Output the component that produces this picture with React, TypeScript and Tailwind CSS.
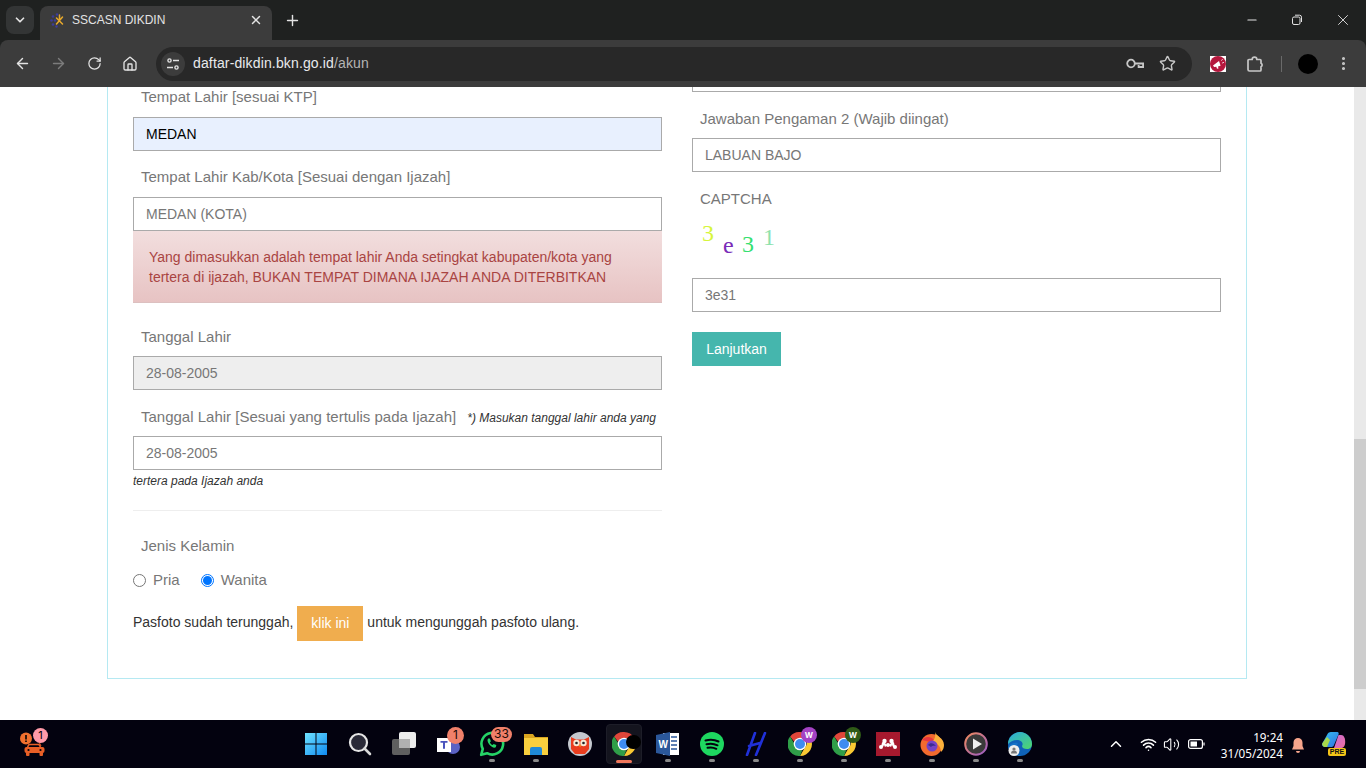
import React from "react";
import {
    ArrowLeft, ArrowRight, RotateCw, Home, X, Plus, ChevronDown, ChevronUp, Minus,
    Star, EllipsisVertical, Volume2, Wifi,
} from "lucide-react";

const inputCls = "block w-full h-[34px] px-3 border border-[#aaaaaa] text-[14px] leading-[20px] flex items-center";

const Label = ({ children, className = "" }: { children: React.ReactNode; className?: string }) => (
    <div className={`h-5 px-2 text-[15px] leading-5 text-[#777777] whitespace-nowrap ${className}`}>{children}</div>
);

const Field = ({ value, className = "bg-white text-[#777777]" }: { value: string; className?: string }) => (
    <div className={`${inputCls} ${className}`}>{value}</div>
);

// Chrome logo, also used for the profile windows
const ChromeLogo = ({ size = 24 }: { size?: number }) => (
    <svg width={size} height={size} viewBox="4 4 40 40">
        <path d="M24 4a20 20 0 0 1 17.3 10H24a10 10 0 0 0-9.4 6.6L7.6 11.5A20 20 0 0 1 24 4z" fill="#e0463a" />
        <path d="M41.3 14A20 20 0 0 1 24 44l8.6-15A10 10 0 0 0 32 14z" fill="#f9c933" />
        <path d="M24 44A20 20 0 0 1 7.6 11.5L16 26a10 10 0 0 0 12 8z" fill="#2f9e48" />
        <circle cx="24" cy="24" r="10.5" fill="#fff" />
        <circle cx="24" cy="24" r="8.3" fill="#3f8cf0" />
    </svg>
);

// yellow burst on the right, blue dots on the left
const SiteFavicon = () => (
    <svg width="15" height="15" viewBox="0 0 15 15" className="shrink-0">
        <path d="M6.5 5l6 6M12.5 4l-6 7M9.5 2v4" stroke="#e8a92c" strokeWidth="1.5" strokeLinecap="round" fill="none" />
        <g fill="#3c3c9a">
            <circle cx="7" cy="1.5" r="1.3" />
            <circle cx="3" cy="3.5" r="1.3" />
            <circle cx="1.5" cy="7.5" r="1.3" />
            <circle cx="3" cy="11.5" r="1.3" />
            <circle cx="6.5" cy="13.5" r="1.2" />
            <circle cx="5" cy="7.5" r="1.2" />
        </g>
    </svg>
);

const TaskIcon = ({ children, dot, active }: { children: React.ReactNode; dot?: boolean; active?: boolean }) => (
    <div className="relative w-11 h-12 flex items-center justify-center">
        {active && <div className="absolute left-1 top-1 w-9 h-10 rounded bg-[#14141e] border border-[#1d1d28]"></div>}
        <div className="relative w-6 h-6 flex items-center justify-center mb-[1px]">{children}</div>
        {dot && <div className="absolute left-[19px] bottom-[6px] w-1.5 h-[3px] rounded-full bg-[#8a8a8a]"></div>}
        {active && <div className="absolute left-[14px] bottom-[5px] w-4 h-[3px] rounded-full bg-[#f0775c]"></div>}
    </div>
);

const Badge = ({ children, className }: { children: React.ReactNode; className: string }) => (
    <span className={`absolute flex items-center justify-center rounded-full text-[12px] leading-none font-['Inter',sans-serif] ${className}`}>{children}</span>
);

const Browser = () => (
    <div className="h-[87px] shrink-0 bg-[#1f2120] text-[#e3e3e3]">
        <div className="h-10 flex items-start pt-1.5 pl-1.5">
            <div className="w-7 h-7 rounded-lg bg-[#333535] flex items-center justify-center">
                <ChevronDown size={14} strokeWidth={3} />
            </div>
            <div className="ml-1.5 w-[232px] h-[34px] rounded-t-lg bg-[#3c3c3c] flex items-center pl-2.5 pr-[9px] pb-[6px] text-[12px]">
                <SiteFavicon />
                <span className="ml-[7px] flex-1">SSCASN DIKDIN</span>
                <X size={14} strokeWidth={2.5} />
            </div>
            <div className="ml-[6px] w-7 h-7 flex items-center justify-center">
                <Plus size={17} strokeWidth={2} />
            </div>
            <div className="ml-auto flex h-7">
                <div className="w-[45px] flex items-center justify-center"><Minus size={14} /></div>
                <div className="w-[46px] flex items-center justify-center">
                    <svg width="12" height="12" viewBox="0 0 12 12" fill="none" stroke="#e3e3e3">
                        <rect x="1.5" y="3" width="7.5" height="7.5" rx="1.5" />
                        <path d="M4 1.2h4.5a2 2 0 0 1 2 2V8" />
                    </svg>
                </div>
                <div className="w-[46px] flex items-center justify-center"><X size={18} strokeWidth={1.2} /></div>
            </div>
        </div>
        <div className="h-[47px] bg-[#3c3c3c] rounded-t-lg flex items-center pl-3.5 pr-[11px]">
            <ArrowLeft size={17} strokeWidth={2} />
            <ArrowRight size={17} strokeWidth={2} className="ml-[19px] text-[#7c7c7c]" />
            <RotateCw size={15} strokeWidth={2} className="ml-[20px]" />
            <Home size={16} strokeWidth={2} className="ml-[20px]" />
            <div className="ml-[18px] w-[1036px] h-[34px] rounded-full bg-[#282828] flex items-center pl-[5px] pr-4">
                <div className="w-6 h-6 rounded-full bg-[#3c3c3c] flex items-center justify-center">
                    <svg width="14" height="14" viewBox="0 0 14 14" fill="none" stroke="#e3e3e3" strokeWidth="1.4">
                        <circle cx="3.5" cy="3.5" r="1.6" />
                        <path d="M7 3.5h6M1 10.5h6" />
                        <circle cx="10.5" cy="10.5" r="1.6" />
                    </svg>
                </div>
                <div className="ml-[8px] text-[14px] tracking-[0.14px] flex-1">
                    <span className="text-[#e8eaed]">daftar-dikdin.bkn.go.id</span><span className="text-[#b5b5b5]">/akun</span>
                </div>
                <svg width="18" height="12" viewBox="0 0 18 12" fill="none" stroke="#c7c7c7" strokeWidth="1.8">
                    <circle cx="5" cy="5.5" r="3.8" />
                    <path d="M8.8 5.5h8.300v3.500h-4.500V7" />
                </svg>
                <Star size={17} strokeWidth={2} className="ml-[15px] text-[#c7c7c7]" />
            </div>
            <div className="ml-[18px] w-4 h-4 bg-white flex items-center justify-center">
                <svg width="16" height="16" viewBox="0 0 16 16">
                    <circle cx="8" cy="8" r="8" fill="#b5173d" />
                    <path d="M3 9.5l6-4.500 1.600 4.800-2.600.6.5 2-1.500.3-.7-2-2.200.4z" fill="#fff" />
                    <path d="M11.5 4.500l1-1.200M12.300 7l1.500-.6" stroke="#fff" />
                </svg>
            </div>
            <svg width="18" height="18" viewBox="0 0 18 18" fill="none" stroke="#c7c7c7" strokeWidth="1.7" strokeLinejoin="round" className="ml-[20px]">
                <path d="M3 4.500h3.200a2.300 2.300 0 0 1 4.600 0H14a1 1 0 0 1 1 1v2.700a2 2 0 0 1 0 3.600V15a1 1 0 0 1-1 1H3.500a1.500 1.500 0 0 1-1.500-1.500v-9a1 1 0 0 1 1-1z" />
            </svg>
            <div className="ml-[17px] w-px h-4 bg-[#6a6a6a]"></div>
            <div className="ml-[16px] w-5 h-5 rounded-full bg-black"></div>
            <EllipsisVertical size={17} strokeWidth={2.4} className="ml-[17px] text-[#c7c7c7]" />
        </div>
    </div>
);

const Captcha = () => (
    <svg width="100" height="55" className="block mt-[7px] mb-[7px]" fontFamily="'Liberation Serif', serif">
        <text x="10" y="25" fontSize="24" fill="#d6f53c">3</text>
        <text x="31" y="37" fontSize="24" fill="#7a2cb8">e</text>
        <text x="50" y="36" fontSize="24" fill="#35e070">3</text>
        <text x="71" y="29" fontSize="24" fill="#8ee2ad">1</text>
    </svg>
);

const FormPanel = () => (
    <div className="w-[1140px] ml-[107px] border-x border-b border-[#b5e9f2] pb-[37px] px-[25px] grid grid-cols-2 gap-[30px]">
        <div>
            <Label>Tempat Lahir [sesuai KTP]</Label>
            <Field value="MEDAN" className="mt-2.5 bg-[#e8f0fe] text-black" />
            <Label className="mt-4">Tempat Lahir Kab/Kota [Sesuai dengan Ijazah]</Label>
            <Field value="MEDAN (KOTA)" className="mt-2.5 bg-white text-[#777777]" />
            <div className="h-[72px] px-4 py-4 bg-gradient-to-b from-[#f2dede] to-[#e7c3c3] border-b border-[#dcc0c0] text-[14px] leading-5 text-[#a94442]">
                Yang dimasukkan adalah tempat lahir Anda setingkat kabupaten/kota yang tertera di ijazah, BUKAN TEMPAT DIMANA IJAZAH ANDA DITERBITKAN
            </div>
            <Label className="mt-6">Tanggal Lahir</Label>
            <Field value="28-08-2005" className="mt-[9px] bg-[#eeeeee] text-[#777777]" />
            <div className="mt-[17px] flex items-center">
                <Label>Tanggal Lahir [Sesuai yang tertulis pada Ijazah]</Label>
                <span className="ml-[3px] mt-[2px] text-[12px] italic text-[#333333] whitespace-nowrap">*) Masukan tanggal lahir anda yang</span>
            </div>
            <Field value="28-08-2005" className="mt-[9px] bg-white text-[#777777]" />
            <div className="mt-1 h-3.5 text-[12px] leading-[14px] italic text-[#333333]">tertera pada Ijazah anda</div>
            <div className="mt-[22px] h-px bg-[#eeeeee]"></div>
            <Label className="mt-[25px]">Jenis Kelamin</Label>
            <div className="mt-3.5 h-5 flex items-center text-[15px] text-[#777777]">
                <span className="w-[13px] h-[13px] rounded-full border border-[#767676] bg-white"></span>
                <span className="ml-[7px]">Pria</span>
                <span className="ml-[21px] w-[13px] h-[13px] rounded-full border border-[#0075ff] bg-white flex items-center justify-center">
                    <span className="w-[9px] h-[9px] rounded-full bg-[#0075ff]"></span>
                </span>
                <span className="ml-[7px]">Wanita</span>
            </div>
            <div className="mt-4 h-[35px] flex items-center text-[14px] text-[#333333]">
                <span className="mb-[2px]">Pasfoto sudah terunggah,</span>
                <span className="mx-1 w-[66px] h-[35px] bg-[#f0ad4e] text-white flex items-center justify-center">klik ini</span>
                <span className="mb-[2px]">untuk mengunggah pasfoto ulang.</span>
            </div>
        </div>
        <div>
            <div className="h-[5px] border-x border-b border-[#aaaaaa]"></div>
            <Label className="mt-[17px]">Jawaban Pengaman 2 (Wajib diingat)</Label>
            <Field value="LABUAN BAJO" className="mt-[9px] bg-white text-[#777777]" />
            <Label className="mt-[17px]">CAPTCHA</Label>
            <Captcha />
            <Field value="3e31" className="bg-white text-[#777777]" />
            <div className="mt-5 w-[89px] h-[34px] bg-[#45b6ad] text-white text-[14px] flex items-center justify-center">Lanjutkan</div>
        </div>
    </div>
);

const Scrollbar = () => (
    <div className="w-3 shrink-0 bg-[#e9e9e9] flex flex-col">
        <div className="h-[352px]"></div>
        <div className="h-[250px] bg-[#cdcdcd]"></div>
    </div>
);

const Taskbar = () => (
    <div className="h-12 shrink-0 bg-[#03020f] flex items-center text-white">
        <div className="w-[294px] h-full pl-[20px] flex items-center">
            <div className="relative w-6 h-6">
                <svg width="25" height="25" viewBox="0 0 25 25" fill="none">
                    <circle cx="6" cy="6.500" r="6" fill="#f0702e" />
                    <path d="M6 3v4.400M6 8.600v1.300" stroke="#20100a" strokeWidth="1.8" />
                    <path d="M18 8l3 6" stroke="#e85f26" strokeWidth="1" />
                    <path d="M7.500 15l1.500-2.500h10l1.500 2.500" stroke="#e85f26" strokeWidth="1.5" />
                    <rect x="4.500" y="15" width="20" height="6" rx="2" fill="#e85f26" />
                    <rect x="6" y="20" width="3.500" height="4" rx="1" fill="#e85f26" />
                    <rect x="19.500" y="20" width="3.500" height="4" rx="1" fill="#e85f26" />
                    <circle cx="8.500" cy="18" r="1.100" fill="#03020f" />
                    <circle cx="20.500" cy="18" r="1.100" fill="#03020f" />
                </svg>
                <Badge className="left-[13px] -top-[4px] w-[15px] h-[15px] bg-[#ff9aa8] text-black !text-[11px]">1</Badge>
            </div>
        </div>
        <TaskIcon>
            <svg width="24" height="24" viewBox="0 0 24 24">
                <defs>
                    <linearGradient id="win" x1="0" y1="0" x2="1" y2="1">
                        <stop offset="0" stopColor="#6fe3ff" />
                        <stop offset="1" stopColor="#0f8af0" />
                    </linearGradient>
                </defs>
                <path d="M1 1h10.500v10.500H1zM12.500 1H23v10.500H12.500zM1 12.500h10.500V23H1zM12.500 12.500H23V23H12.500z" fill="url(#win)" />
            </svg>
        </TaskIcon>
        <TaskIcon>
            <svg width="24" height="24" viewBox="0 0 24 24" fill="none">
                <circle cx="10.500" cy="10.500" r="8.500" fill="#2a2a38" stroke="#e6e6e6" strokeWidth="2.2" />
                <path d="M16.500 16.500l5.500 5.500" stroke="#d8d8d8" strokeWidth="2.6" strokeLinecap="round" />
            </svg>
        </TaskIcon>
        <TaskIcon>
            <svg width="24" height="24" viewBox="0 0 24 24">
                <rect x="0" y="7" width="18" height="16" rx="2" fill="#5f5f5f" />
                <rect x="7" y="0" width="17" height="16" rx="2" fill="#ededed" />
                <rect x="7" y="7" width="11" height="9" fill="#b0b0b0" />
            </svg>
        </TaskIcon>
        <TaskIcon>
            <svg width="24" height="24" viewBox="0 0 24 24">
                <circle cx="17" cy="15" r="7" fill="#5b62c4" />
                <circle cx="18" cy="5" r="4" fill="#7b83eb" />
                <rect x="1" y="6" width="14" height="14" fill="#fff" />
                <path d="M4.500 9h7v1.800H9v6H7v-6H4.500z" fill="#4b53bc" />
            </svg>
            <Badge className="left-[11px] -top-[5px] w-[17px] h-[17px] bg-[#f0806a] text-[#1a0a06]">1</Badge>
        </TaskIcon>
        <TaskIcon dot>
            <svg width="26" height="26" viewBox="0 0 24 24" fill="none" className="shrink-0">
                <path d="M2 22l1.500-5.500A10 10 0 1 1 7.500 20.500z" stroke="#25d366" strokeWidth="2.4" strokeLinejoin="round" />
                <path d="M8.500 7c-1 1-1 3 1 5.500s4.500 3.500 6 2.500l.5-2-2.500-1-1 1c-1-.5-2-1.500-2.500-2.500l1-1-1-2.500z" fill="#25d366" />
            </svg>
            <Badge className="left-[11px] -top-[5px] w-[21px] h-[15px] bg-[#f0806a] text-[#1a0a06]">33</Badge>
        </TaskIcon>
        <TaskIcon dot>
            <svg width="24" height="24" viewBox="0 0 24 24">
                <path d="M0 2h9l2 3h13v6H0z" fill="#d9a520" />
                <path d="M0 6h24v17H0z" fill="#f8cf3e" />
                <path d="M6 17a2 2 0 0 1 2-2h8a2 2 0 0 1 2 2v6H6z" fill="#1f8ad8" />
            </svg>
        </TaskIcon>
        <TaskIcon>
            <svg width="24" height="24" viewBox="0 0 24 24">
                <circle cx="12" cy="12" r="12" fill="#c4c7ce" />
                <path d="M3 5l5 2.500h8L21 5v12l-4 5H7l-4-5z" fill="#ea3d1e" />
                <circle cx="8.500" cy="11" r="3.200" fill="#f6ead6" />
                <circle cx="15.500" cy="11" r="3.200" fill="#f6ead6" />
                <circle cx="8.500" cy="11" r="1.300" fill="#222" />
                <circle cx="15.500" cy="11" r="1.300" fill="#222" />
                <path d="M11 13h2l-1 2.500z" fill="#f2a81d" />
            </svg>
        </TaskIcon>
        <TaskIcon active>
            <ChromeLogo size={24} />
            <span className="absolute left-[14px] top-[3px] w-[15px] h-[14px] rounded-full bg-black"></span>
        </TaskIcon>
        <TaskIcon dot>
            <svg width="24" height="24" viewBox="0 0 24 24">
                <path d="M7 1h16v22H7z" fill="#fff" />
                <path d="M15 5h6M15 9h6M15 13h6M15 17h6" stroke="#2b579a" strokeWidth="1.6" />
                <path d="M0 3l14-3v24L0 21z" fill="#2b579a" />
                <text x="2.500" y="16" fontSize="10" fontWeight="700" fill="#fff" fontFamily="'Liberation Sans', sans-serif">W</text>
            </svg>
        </TaskIcon>
        <TaskIcon dot>
            <svg width="24" height="24" viewBox="0 0 24 24" fill="none">
                <circle cx="12" cy="12" r="12" fill="#1ed760" />
                <path d="M5.500 8.500c4.500-1.300 9-1 13 1M6.500 12.200c3.800-1 7.500-.7 11 1.100M7.500 15.800c3-.7 6-.5 8.800 1" stroke="#03020f" strokeWidth="2" strokeLinecap="round" />
            </svg>
        </TaskIcon>
        <TaskIcon dot>
            <svg width="24" height="24" viewBox="0 0 24 24" fill="none" stroke="#2030d8" strokeWidth="2.6" strokeLinecap="round">
                <path d="M11 1L3 23M21 1L12 23M5 14l11-3" />
            </svg>
        </TaskIcon>
        <TaskIcon dot>
            <ChromeLogo size={24} />
            <Badge className="left-[13px] -top-[5px] w-[16px] h-[16px] bg-[#a442c4] text-white !text-[8px] font-bold">W</Badge>
        </TaskIcon>
        <TaskIcon dot>
            <ChromeLogo size={24} />
            <Badge className="left-[13px] -top-[5px] w-[16px] h-[16px] bg-[#2f5a17] text-white !text-[8px] font-bold">W</Badge>
        </TaskIcon>
        <TaskIcon dot>
            <svg width="24" height="24" viewBox="0 0 24 24">
                <rect width="24" height="24" fill="#a6192e" />
                <g fill="#fff">
                    <circle cx="8.500" cy="9" r="2.200" />
                    <circle cx="15.500" cy="9" r="2.200" />
                    <circle cx="12" cy="13" r="2" />
                    <circle cx="5" cy="15" r="2" />
                    <circle cx="19" cy="15" r="2" />
                    <path d="M6 10.500l2-1 3 4-2 1.500-1-2-1 2H5zM18 10.500l-2-1-3 4 2 1.500 1-2 1 2h2z" />
                </g>
            </svg>
        </TaskIcon>
        <TaskIcon dot>
            <svg width="24" height="24" viewBox="0 0 24 24">
                <circle cx="11.500" cy="13" r="11" fill="#f26a2e" />
                <path d="M15 0c1 4 9 6 9 13 0 3-1 5-3 7 0-6-4-9-9-10 2-2 4-5 3-10z" fill="#fbb03b" />
                <path d="M2 8c3-4 9-4 12 0l-4 2z" fill="#e8363f" />
                <circle cx="12" cy="14" r="5.500" fill="#7443c4" />
                <path d="M8 13c2-3 6-2 8 1-2-.5-4-.5-5 1z" fill="#3b2a91" />
            </svg>
        </TaskIcon>
        <TaskIcon dot>
            <svg width="24" height="24" viewBox="0 0 24 24">
                <defs>
                    <linearGradient id="ring" x1="0" y1="0" x2="1" y2="1">
                        <stop offset="0" stopColor="#f08a5c" />
                        <stop offset="1" stopColor="#9a5cc8" />
                    </linearGradient>
                </defs>
                <circle cx="12" cy="12" r="10.800" fill="#3a3a3a" stroke="url(#ring)" strokeWidth="2" />
                <path d="M9 6.500L18 12l-9 5.500z" fill="#efefef" />
            </svg>
        </TaskIcon>
        <TaskIcon dot>
            <svg width="24" height="24" viewBox="0 0 24 24">
                <defs>
                    <linearGradient id="edge" x1="0" y1="0" x2="1" y2="1">
                        <stop offset="0" stopColor="#2aa9e0" />
                        <stop offset="1" stopColor="#4fd86a" />
                    </linearGradient>
                </defs>
                <circle cx="12" cy="12" r="12" fill="#0f62b8" />
                <path d="M0 12C0 5 6 0 12 0s12 5 12 12c0 3-2 5-5 5-3 0-5-1-5-3 2-3-1-6-5-6-4 0-7 2-9 4z" fill="url(#edge)" />
                <path d="M13 24c-4-2-6-8-3-13-4-1-8 1-10 4 1 5 6 9 13 9z" fill="#1572c8" />
                <circle cx="6" cy="18.500" r="5.500" fill="#eeeeee" />
                <circle cx="6" cy="17" r="1.600" fill="#777" />
                <path d="M3 21.500a3 3 0 0 1 6 0z" fill="#777" />
            </svg>
        </TaskIcon>
        <div className="flex-1 h-full flex items-center">
            <ChevronUp size={18} strokeWidth={2} className="ml-[65px]" />
            <Wifi size={17} strokeWidth={2.2} className="ml-[15px]" />
            <Volume2 size={17} strokeWidth={1.5} className="ml-[6px]" />
            <svg width="17" height="10" viewBox="0 0 17 10" fill="none" className="ml-[8px]">
                <rect x="0.600" y="0.600" width="13.800" height="8.800" rx="2" stroke="#fff" strokeWidth="1.2" />
                <rect x="2.500" y="2.500" width="6.500" height="5" fill="#fff" />
                <path d="M16 3.500v3" stroke="#fff" strokeWidth="1.2" />
            </svg>
            <div className="w-[78px] mt-[2px] text-right text-[11.7px] leading-4 font-['Noto_Sans',sans-serif] whitespace-nowrap">
                <div>19:24</div>
                <div>31/05/2024</div>
            </div>
            <svg width="16" height="17" viewBox="0 0 16 17" fill="#f7a58c" className="ml-[7px] mt-[2px]">
                <path d="M8 1a4.500 4.500 0 0 0-4.500 4.500V9L2 12.500h12L12.500 9V5.500A4.500 4.500 0 0 0 8 1z" />
                <path d="M6 14h4a2 2 0 0 1-4 0z" />
            </svg>
            <div className="relative ml-[16px] w-6 h-6">
                <svg width="24" height="17" viewBox="0 0 24 17">
                    <defs>
                        <linearGradient id="cop1" x1="0" y1="0" x2="1" y2="1">
                            <stop offset="0" stopColor="#35c1f1" />
                            <stop offset="1" stopColor="#2f6fe0" />
                        </linearGradient>
                        <linearGradient id="cop2" x1="0" y1="0" x2="1" y2="1">
                            <stop offset="0" stopColor="#c66ad8" />
                            <stop offset="1" stopColor="#ef6f9c" />
                        </linearGradient>
                    </defs>
                    <path d="M9 0h6c1.500 0 2 1 1.500 2.500L12 13c-.5 1.500-1.500 2-3 2H3c-2.500 0-3.500-2-2.500-4L5 3c.8-2 2-3 4-3z" fill="url(#cop1)" />
                    <path d="M1 14c-1-1-1-2-.5-3L5 5l3 3-3 7H3c-1 0-1.500-.5-2-1z" fill="#a8d84a" />
                    <path d="M16.500 3H19c2 0 3 1 3.800 3.500 1 4 .2 9.500-3.300 9.500H12z" fill="url(#cop2)" />
                </svg>
                <span className="absolute left-[6px] top-[16px] w-[18px] h-[8px] rounded-[2px] bg-[#f5c518] text-[#111] text-[7px] leading-[8px] font-bold text-center">PRE</span>
            </div>
        </div>
    </div>
);

export default function App() {
    return (
        <div className="h-[768px] w-[1366px] overflow-hidden flex flex-col font-['Liberation_Sans',Arial,sans-serif] bg-white">
            <Browser />
            <div className="flex-1 min-h-0 flex">
                <div className="flex-1 min-w-0">
                    <FormPanel />
                </div>
                <Scrollbar />
            </div>
            <Taskbar />
        </div>
    );
}
